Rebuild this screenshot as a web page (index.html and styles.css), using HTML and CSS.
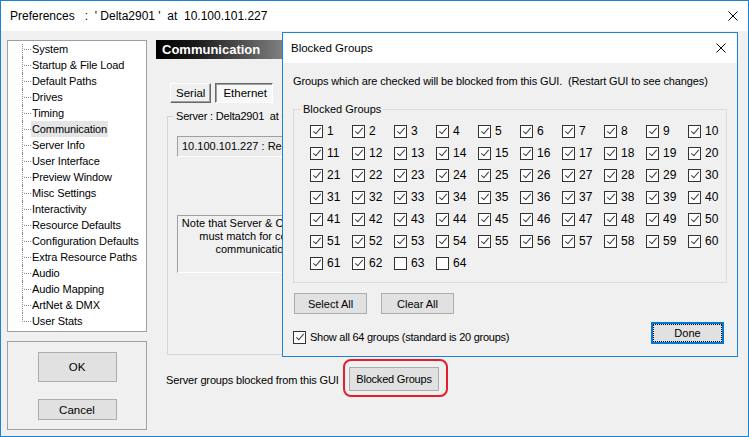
FILE: index.html
```html
<!DOCTYPE html>
<html>
<head>
<meta charset="utf-8">
<link rel="stylesheet" href="styles.css">
</head>
<body>
<div class="window">
  <div class="titlebar">
    <span class="title">Preferences   :  ' Delta2901 '  at  10.100.101.227</span>
    <svg class="close" width="10" height="10" viewBox="0 0 10 10"><path d="M0.5 0.5L9.5 9.5M9.5 0.5L0.5 9.5" stroke="#000" stroke-width="1" fill="none"/></svg>
  </div>
  <div class="client">
    <div class="left">
      <ul class="tree">
        <li><span>System</span></li>
        <li><span>Startup &amp; File Load</span></li>
        <li><span>Default Paths</span></li>
        <li><span>Drives</span></li>
        <li><span>Timing</span></li>
        <li><span class="sel">Communication</span></li>
        <li><span>Server Info</span></li>
        <li><span>User Interface</span></li>
        <li><span>Preview Window</span></li>
        <li><span>Misc Settings</span></li>
        <li><span>Interactivity</span></li>
        <li><span>Resource Defaults</span></li>
        <li><span>Configuration Defaults</span></li>
        <li><span>Extra Resource Paths</span></li>
        <li><span>Audio</span></li>
        <li><span>Audio Mapping</span></li>
        <li><span>ArtNet &amp; DMX</span></li>
        <li><span>User Stats</span></li>
      </ul>
      <div class="okbox">
        <button class="btn ok">OK</button>
        <button class="btn cancel">Cancel</button>
      </div>
    </div>
    <div class="right">
      <div class="header">Communication</div>
      <div class="tabs">
        <button class="tab">Serial</button>
        <button class="tab pressed">Ethernet</button>
      </div>
      <div class="server">
        <span class="server-label">Server : Delta2901  at</span>
        <div class="field">10.100.101.227 : Ready</div>
        <div class="note">Note that Server &amp; Client GUI<br>must match for correct<br>communication.</div>
      </div>
      <div class="blockrow">
        <span class="blocktext">Server groups blocked from this GUI</span>
        <span class="ring"><button class="btn blocked">Blocked Groups</button></span>
      </div>
    </div>
  </div>

  <div class="dialog">
    <div class="dtitle">
      <span>Blocked Groups</span>
      <svg class="dclose" width="10" height="10" viewBox="0 0 10 10"><path d="M0.5 0.5L9.5 9.5M9.5 0.5L0.5 9.5" stroke="#000" stroke-width="1" fill="none"/></svg>
    </div>
    <div class="dbody">
      <div class="info">Groups which are checked will be blocked from this GUI.  (Restart GUI to see changes)</div>
      <div class="group">
        <span class="glabel">Blocked Groups</span>
        <div class="grid">
          <label class="cbl"><span class="cb on"></span>1</label>
          <label class="cbl"><span class="cb on"></span>2</label>
          <label class="cbl"><span class="cb on"></span>3</label>
          <label class="cbl"><span class="cb on"></span>4</label>
          <label class="cbl"><span class="cb on"></span>5</label>
          <label class="cbl"><span class="cb on"></span>6</label>
          <label class="cbl"><span class="cb on"></span>7</label>
          <label class="cbl"><span class="cb on"></span>8</label>
          <label class="cbl"><span class="cb on"></span>9</label>
          <label class="cbl"><span class="cb on"></span>10</label>
          <label class="cbl"><span class="cb on"></span>11</label>
          <label class="cbl"><span class="cb on"></span>12</label>
          <label class="cbl"><span class="cb on"></span>13</label>
          <label class="cbl"><span class="cb on"></span>14</label>
          <label class="cbl"><span class="cb on"></span>15</label>
          <label class="cbl"><span class="cb on"></span>16</label>
          <label class="cbl"><span class="cb on"></span>17</label>
          <label class="cbl"><span class="cb on"></span>18</label>
          <label class="cbl"><span class="cb on"></span>19</label>
          <label class="cbl"><span class="cb on"></span>20</label>
          <label class="cbl"><span class="cb on"></span>21</label>
          <label class="cbl"><span class="cb on"></span>22</label>
          <label class="cbl"><span class="cb on"></span>23</label>
          <label class="cbl"><span class="cb on"></span>24</label>
          <label class="cbl"><span class="cb on"></span>25</label>
          <label class="cbl"><span class="cb on"></span>26</label>
          <label class="cbl"><span class="cb on"></span>27</label>
          <label class="cbl"><span class="cb on"></span>28</label>
          <label class="cbl"><span class="cb on"></span>29</label>
          <label class="cbl"><span class="cb on"></span>30</label>
          <label class="cbl"><span class="cb on"></span>31</label>
          <label class="cbl"><span class="cb on"></span>32</label>
          <label class="cbl"><span class="cb on"></span>33</label>
          <label class="cbl"><span class="cb on"></span>34</label>
          <label class="cbl"><span class="cb on"></span>35</label>
          <label class="cbl"><span class="cb on"></span>36</label>
          <label class="cbl"><span class="cb on"></span>37</label>
          <label class="cbl"><span class="cb on"></span>38</label>
          <label class="cbl"><span class="cb on"></span>39</label>
          <label class="cbl"><span class="cb on"></span>40</label>
          <label class="cbl"><span class="cb on"></span>41</label>
          <label class="cbl"><span class="cb on"></span>42</label>
          <label class="cbl"><span class="cb on"></span>43</label>
          <label class="cbl"><span class="cb on"></span>44</label>
          <label class="cbl"><span class="cb on"></span>45</label>
          <label class="cbl"><span class="cb on"></span>46</label>
          <label class="cbl"><span class="cb on"></span>47</label>
          <label class="cbl"><span class="cb on"></span>48</label>
          <label class="cbl"><span class="cb on"></span>49</label>
          <label class="cbl"><span class="cb on"></span>50</label>
          <label class="cbl"><span class="cb on"></span>51</label>
          <label class="cbl"><span class="cb on"></span>52</label>
          <label class="cbl"><span class="cb on"></span>53</label>
          <label class="cbl"><span class="cb on"></span>54</label>
          <label class="cbl"><span class="cb on"></span>55</label>
          <label class="cbl"><span class="cb on"></span>56</label>
          <label class="cbl"><span class="cb on"></span>57</label>
          <label class="cbl"><span class="cb on"></span>58</label>
          <label class="cbl"><span class="cb on"></span>59</label>
          <label class="cbl"><span class="cb on"></span>60</label>
          <label class="cbl"><span class="cb on"></span>61</label>
          <label class="cbl"><span class="cb on"></span>62</label>
          <label class="cbl"><span class="cb"></span>63</label>
          <label class="cbl"><span class="cb"></span>64</label>
        </div>
      </div>
      <div class="gbuttons">
        <button class="btn sbtn">Select All</button>
        <button class="btn sbtn">Clear All</button>
      </div>
      <div class="bottom">
        <label class="cbl showall"><span class="cb on"></span>Show all 64 groups (standard is 20 groups)</label>
        <button class="btn done">Done</button>
      </div>
    </div>
  </div>
</div>
</body>
</html>
```
FILE: styles.css
```css
* { box-sizing: border-box; }
html, body { margin: 0; padding: 0; }
body {
  width: 749px;
  height: 437px;
  overflow: hidden;
  font-family: "Liberation Sans", Arial, sans-serif;
  font-size: 11px;
  color: #000;
  background: #f0f0f0;
}
.window {
  position: relative;
  width: 749px;
  height: 437px;
  border: 1px solid #1883d7;
  display: flex;
  flex-direction: column;
  background: #f0f0f0;
}
.titlebar {
  height: 30px;
  background: #fff;
  display: flex;
  align-items: center;
  padding-left: 9px;
  padding-right: 10px;
  flex: none;
}
.title {
  white-space: pre;
  font-size: 12px;
  flex: 1;
}
.client {
  flex: 1;
  display: flex;
  gap: 9px;
  padding: 9px 6px 6px 6px;
  min-height: 0;
}
.left {
  width: 140px;
  display: flex;
  flex-direction: column;
  gap: 9px;
  flex: none;
}
.tree {
  list-style: none;
  margin: 0;
  padding: 0;
  height: 292px;
  border: 1px solid #a0a0a0;
  background: #fff;
  flex: none;
  letter-spacing: -0.1px;
}
.tree li {
  position: relative;
  height: 16px;
  line-height: 16px;
  padding-left: 23px;
  white-space: nowrap;
}
.tree li::before {
  content: "";
  position: absolute;
  left: 14px;
  top: 0;
  height: 16px;
  border-left: 1px dotted #8a8a8a;
}
.tree li:first-child::before { top: 3px; height: 13px; }
.tree li:last-child::before { height: 9px; }
.tree li::after {
  content: "";
  position: absolute;
  left: 16px;
  top: 8px;
  width: 7px;
  border-top: 1px dotted #8a8a8a;
}
.tree li span { padding: 0 1px; display: inline-block; }
.tree li span.sel { background: #e5e5e5; }
.okbox {
  flex: 1;
  border: 1px solid #a0a0a0;
  display: flex;
  flex-direction: column;
  align-items: center;
  padding-top: 10px;
  gap: 17px;
}
.btn {
  font-family: "Liberation Sans", Arial, sans-serif;
  font-size: 11px;
  color: #000;
  background: #e1e1e1;
  border: 1px solid #adadad;
  padding: 0;
  margin: 0;
}
.ok { width: 79px; height: 30px; font-size: 11.5px; }
.cancel { width: 79px; height: 21px; font-size: 11.5px; }
.right {
  flex: 1;
  display: flex;
  flex-direction: column;
  min-width: 0;
}
.header {
  height: 19px;
  width: 580px;
  background: linear-gradient(to right, #000 0px, #1a1a1a 40px, #8a8a8a 135px, #d8d8d8 100%);
  color: #fff;
  font-weight: bold;
  font-size: 13px;
  line-height: 19px;
  padding-left: 6px;
  flex: none;
}
.tabs {
  display: flex;
  gap: 4px;
  margin-top: 24px;
  margin-left: 14px;
}
.tab {
  height: 20px;
  font-family: "Liberation Sans", Arial, sans-serif;
  font-size: 11.5px;
  padding: 0 5px;
  background: #f0f0f0;
  border: 1px solid;
  border-color: #fff #696969 #696969 #fff;
  box-shadow: inset -1px -1px 0 #a0a0a0;
}
.tab.pressed {
  border-color: #696969 #fff #fff #696969;
  box-shadow: inset 1px 1px 0 #a0a0a0;
  background: #f8f8f8;
  padding: 0 5px 0 7px;
}
.server {
  position: relative;
  margin-left: 11px;
  margin-top: 13px;
  width: 560px;
  height: 239px;
  border: 1px solid #d5d5d5;
  padding: 19px 9px 0 9px;
  flex: none;
}
.server-label {
  position: absolute;
  top: -8px;
  left: 6px;
  background: #f0f0f0;
  padding: 0 2px;
  font-size: 11px;
  letter-spacing: -0.2px;
  white-space: pre;
  line-height: 15px;
}
.field {
  width: 300px;
  height: 21px;
  border: 1px solid;
  border-color: #a0a0a0 #fff #fff #a0a0a0;
  background: #ebebeb;
  font-size: 11px;
  line-height: 19px;
  padding-left: 4px;
  white-space: nowrap;
}
.note {
  margin-top: 58px;
  width: 154px;
  height: 58px;
  border: 1px solid;
  border-color: #a0a0a0 #fff #fff #a0a0a0;
  text-align: center;
  font-size: 11px;
  line-height: 13px;
  padding-top: 1px;
  white-space: nowrap;
}
.blockrow {
  display: flex;
  align-items: center;
  margin-top: 4px;
}
.blocktext {
  width: 187px;
  padding-left: 10px;
  font-size: 11px;
  letter-spacing: -0.15px;
  white-space: nowrap;
  margin-top: 3px;
}
.ring {
  display: inline-flex;
  border: 2px solid #e41e2a;
  border-radius: 8px;
  padding: 6px 7px 4px 4px;
}
.blocked { width: 90px; height: 24px; font-size: 11px; letter-spacing: -0.2px; }

/* dialog */
.dialog {
  position: absolute;
  left: 281px;
  top: 31px;
  width: 456px;
  height: 325px;
  border: 1px solid #1883d7;
  background: #f0f0f0;
  display: flex;
  flex-direction: column;
}
.dtitle {
  height: 30px;
  background: #fff;
  display: flex;
  align-items: center;
  padding-left: 8px;
  padding-right: 11px;
  font-size: 11.5px;
  flex: none;
}
.dtitle span { flex: 1; }
.dbody {
  padding: 11px 10px 0 10px;
  display: flex;
  flex-direction: column;
}
.info {
  font-size: 11px;
  letter-spacing: -0.12px;
  line-height: 14px;
  white-space: pre;
}
.group {
  position: relative;
  margin-top: 21px;
  height: 174px;
  border: 1px solid #dcdcdc;
  padding: 10px 0 0 16px;
}
.glabel {
  position: absolute;
  top: -8px;
  left: 7px;
  padding: 0 2px;
  background: #f0f0f0;
  font-size: 11px;
  line-height: 14px;
}
.grid {
  display: grid;
  grid-template-columns: repeat(10, 42px);
  grid-auto-rows: 22px;
}
.cbl {
  display: flex;
  align-items: center;
  gap: 4px;
  font-size: 12px;
  white-space: nowrap;
}
.cb {
  position: relative;
  width: 13px;
  height: 13px;
  border: 1px solid #333;
  background: #fff;
  flex: none;
}
.cb.on::after {
  content: "";
  position: absolute;
  left: 4px;
  top: 0px;
  width: 3px;
  height: 7px;
  border: solid #3c3c3c;
  border-width: 0 1px 1px 0;
  transform: rotate(40deg);
  transform-origin: 50% 50%;
}
.gbuttons {
  display: flex;
  gap: 14px;
  margin-top: 10px;
  padding-left: 1px;
}
.sbtn { width: 73px; height: 21px; font-size: 11px; }
.bottom {
  display: flex;
  align-items: flex-start;
  margin-top: 8px;
  padding-right: 3px;
}
.showall {
  margin-top: 8px;
  height: 14px;
  flex: 1;
  font-size: 11px;
  letter-spacing: -0.25px;
}
.done {
  width: 73px;
  height: 22px;
  font-size: 11px;
  border: 2px solid #0078d7;
  outline: 1px dotted #000;
  outline-offset: -3px;
}
```
